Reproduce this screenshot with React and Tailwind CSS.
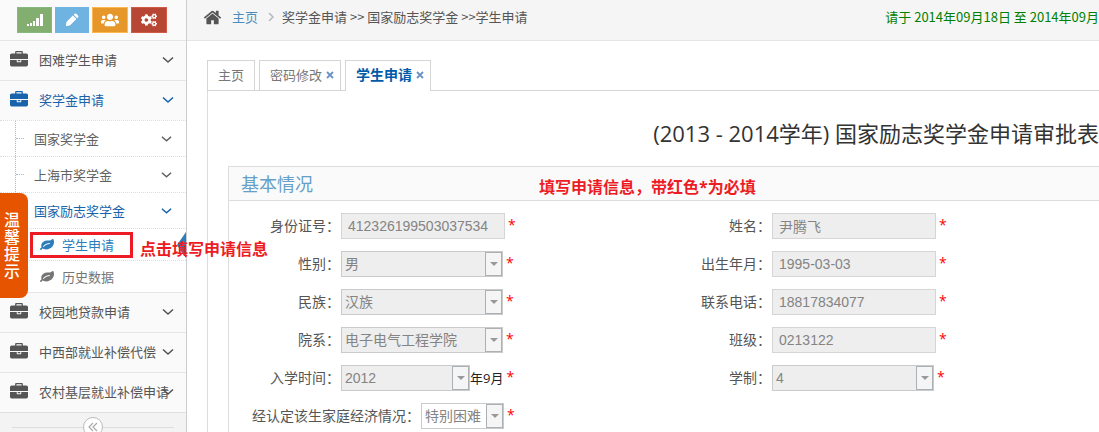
import { FaCogs, FaUsers } from 'react-icons/fa';

const paths = {
  home: 'M1472 992v480q0 26-19 45t-45 19h-384v-384h-256v384h-384q-26 0-45-19t-19-45v-480q0-1 .5-3t.5-3l575-474 575 474q1 2 1 6zm223-69l-62 74q-8 9-21 11h-3q-13 0-21-7l-692-577-692 577q-12 8-24 7-13-2-21-11l-62-74q-8-10-7-23.5t11-21.5l719-599q32-26 76-26t76 26l244 204v-195q0-14 9-23t23-9h192q14 0 23 9t9 23v408l219 182q10 8 11 21.5t-7 23.5z',
  briefcase: 'M640 256h512v-128h-512v128zm1152 640v480q0 66-47 113t-113 47h-1472q-66 0-113-47t-47-113v-480h672v160q0 26 19 45t45 19h320q26 0 45-19t19-45v-160h672zm-768 0v128h-256v-128h256zm768-480v384h-1792v-384q0-66 47-113t113-47h352v-160q0-40 28-68t68-28h576q40 0 68 28t28 68v160h352q66 0 113 47t47 113z',
  leaf: 'M1280 704q0-26-19-45t-45-19q-172 0-318 49.5t-259.5 134-235.5 219.5q-19 21-19 45 0 26 19 45t45 19q24 0 45-19 27-24 74-71t67-66q137-124 268.5-176t313.5-52q26 0 45-19t19-45zm512-198q0 95-20 193-46 224-184.5 383t-357.5 268q-214 108-438 108-148 0-286-47-15-5-88-42t-96-37q-16 0-39.5 32t-45 70-52.5 70-60 32q-43 0-63.5-17.5t-45.5-59.5q-2-4-6-11t-5.5-10-3-9.5-1.5-13.5q0-35 31-73.5t68-65.5 68-56 31-48q0-4-14-38t-16-44q-9-51-9-104 0-115 43.5-220t119-184.5 170.5-139 204-95.5q55-18 145-25.5t179.5-9 178.5-6 163.5-24 113.5-56.5l29.5-29.5 29.5-28 27-20 36.5-16 43.5-4.5q39 0 70.5 46t47.5 112 24 124 8 96z',
};

function Icon({ name, className }) {
  return (
    <svg viewBox="0 0 1792 1792" fill="currentColor" className={className} aria-hidden="true">
      <path d={paths[name]} />
    </svg>
  );
}

function Chevron({ className = '' }) {
  return (
    <svg viewBox="0 0 12 8" fill="none" stroke="currentColor" strokeWidth="1.6" className={`h-2 w-3 shrink-0 ${className}`} aria-hidden="true">
      <path d="M1 1.5l5 4.5 5-4.5" />
    </svg>
  );
}

function MenuItem({ label, active }) {
  return (
    <a
      href="#"
      className={`relative flex h-10 shrink-0 items-center border-t border-[#e5e5e5] bg-[#fafafa] pb-0.5 pl-2.5 whitespace-nowrap ${active ? 'text-[#1963aa]' : 'text-[#555]'}`}
    >
      <Icon name="briefcase" className="mr-[11px] size-[18px] shrink-0" />
      {label}
      <Chevron className="absolute right-3" />
    </a>
  );
}

function SubItem({ label, active, line }) {
  return (
    <a
      href="#"
      className={`relative flex h-9 items-center justify-between border-t border-dotted border-[#ddd] pr-3.5 pl-[34px] ${active ? 'text-[#1963aa]' : 'text-[#616161]'}`}
    >
      {line && <span className="absolute inset-y-0 left-[15px] border-l border-dotted border-[#9dbdd6]" />}
      {line && <span className="absolute left-4 w-2 border-t border-dotted border-[#9dbdd6]" />}
      {label}
      <Chevron className="w-[11px]" />
    </a>
  );
}

function LeafItem({ label, active }) {
  return (
    <a
      href="#"
      className={`relative flex h-8 items-center gap-2 border-t border-dotted border-[#ddd] pl-10 ${active ? 'text-[#2b7dbc]' : 'text-[#757575]'}`}
    >
      <Icon name="leaf" className="size-3.5" />
      {label}
      {active && <span className="absolute right-0 border-y-[13px] border-r-[9px] border-y-transparent border-r-[#2b7dbc]" />}
      {active && <span className="absolute top-[3px] right-[53px] left-[30px] h-[26px] border-3 border-[#ed1c24]" />}
      {active && (
        <span className="absolute top-2 left-[140px] z-10 text-base leading-6 font-bold whitespace-nowrap text-[#ed1c24]">
          点击填写申请信息
        </span>
      )}
    </a>
  );
}

function Sidebar() {
  return (
    <nav className="z-10 flex w-[187px] shrink-0 flex-col border-r border-[#ccc] bg-[#f3f3f3]">
      <div className="flex h-10 shrink-0 items-center gap-[3px] bg-[#fafafa] pl-[17px] text-white">
        <button aria-label="统计" className="flex h-[26px] w-[35px] items-center justify-center border border-[#87b87f] bg-[#82af6f]">
          <svg viewBox="0 0 16 14" fill="currentColor" className="h-3.5 w-4" aria-hidden="true">
            <path d="M0 11h2v2H0zM3 10h2v3H3zM6 8h2v5H6zM9 5h3v8H9zM13 1h3v12h-3z" />
          </svg>
        </button>
        <button aria-label="编辑" className="flex h-[26px] w-[34px] items-center justify-center bg-[#6fb3e0]">
          <svg viewBox="0 0 14 14" fill="currentColor" className="size-3.5" aria-hidden="true">
            <path d="M7.9 2.6l3.5 3.5-6 6Q4.500 13 1 13q0-3.500.9-4.400zM8.700 1.800l1-1q.8-.6 1.600 0l1.900 1.900q.6.800 0 1.600l-1 1z" />
          </svg>
        </button>
        <button aria-label="用户" className="flex h-[26px] w-9 items-center justify-center border border-[#ffb752] bg-[#e59729]">
          <FaUsers className="size-[18px]" />
        </button>
        <button aria-label="设置" className="flex h-[26px] w-9 items-center justify-center border border-[#d15b47] bg-[#b74635]">
          <FaCogs className="size-4" />
        </button>
      </div>
      <MenuItem label="困难学生申请" />
      <MenuItem label="奖学金申请" active />
      <div className="shrink-0 bg-white">
        <SubItem label="国家奖学金" line />
        <SubItem label="上海市奖学金" line />
        <SubItem label="国家励志奖学金" active />
        <LeafItem label="学生申请" active />
        <LeafItem label="历史数据" />
      </div>
      <MenuItem label="校园地贷款申请" />
      <MenuItem label="中西部就业补偿代偿" />
      <MenuItem label="农村基层就业补偿申请" />
      <div className="flex shrink-0 items-center border-t border-[#e0e0e0] px-3 pt-1">
        <span className="h-px flex-1 bg-[#ddd]" />
        <button aria-label="收起菜单" className="flex size-5 items-center justify-center rounded-full border border-[#bbb] bg-white text-[#aaa]">
          <svg viewBox="0 0 10 10" fill="none" stroke="currentColor" strokeWidth="1.2" className="size-2.5" aria-hidden="true">
            <path d="M5 1L1 5l4 4M9 1L5 5l4 4" />
          </svg>
        </button>
        <span className="h-px flex-1 bg-[#ddd]" />
      </div>
    </nav>
  );
}

function Tab({ label, active, closable }) {
  return (
    <div
      className={`flex items-center gap-1 border border-b-0 border-[#d5d5d5] bg-white pb-0.5 pl-2.5 ${closable ? 'pr-1.5' : 'pr-2.5'} ${active ? '-mb-px h-[31px] text-sm font-bold text-[#005ba8]' : 'h-[30px] text-[#777]'}`}
    >
      <a href="#">{label}</a>
      {closable && (
        <button aria-label={`关闭${label}`} className="flex size-2 items-center justify-center text-[#6a92c4]">
          <svg viewBox="0 0 8 8" stroke="currentColor" strokeWidth="1.8" className="size-2" aria-hidden="true">
            <path d="M1 1l6 6M7 1L1 7" />
          </svg>
        </button>
      )}
    </div>
  );
}

function Field({ id, label, value, select, suffix, wide, width = 'w-[164px]', bg = 'bg-[#eee]' }) {
  return (
    <div className="flex h-[26px] items-center text-sm">
      <label htmlFor={id} className={`${wide ? 'w-48' : 'w-28'} pr-px text-right whitespace-nowrap text-[#555]`}>
        {label}：
      </label>
      {select ? (
        <div className={`relative ${width}`}>
          <select
            id={id}
            disabled
            className={`block h-[26px] w-full appearance-none border border-[#c8cacc] pl-[3px] font-[Liberation_Sans,Noto_Sans_CJK_SC,sans-serif] text-[#848484] opacity-100 ${bg}`}
          >
            <option>{value}</option>
          </select>
          <span className="pointer-events-none absolute inset-y-px right-px flex w-[17px] items-center justify-center border border-[#abb0b5] bg-[#f5f5f5]">
            <span className="border-x-4 border-t-4 border-x-transparent border-t-[#999]" />
          </span>
        </div>
      ) : (
        <input
          id={id}
          disabled
          defaultValue={value}
          className={`h-[26px] border border-[#d5d5d5] bg-[#eee] pl-1.5 font-[Liberation_Sans,Noto_Sans_CJK_SC,sans-serif] text-[#848484] ${width}`}
        />
      )}
      {suffix && <span className="text-[13px] text-[#222]">{suffix}</span>}
      <span className="pb-0.5 pl-[3px] text-sm text-[#f00]">*</span>
    </div>
  );
}

export default function App() {
  return (
    <div className="relative flex h-screen overflow-hidden bg-white font-[Open_Sans,Noto_Sans_CJK_SC,sans-serif] text-[13px] leading-5">
      <Sidebar />
      <aside className="absolute top-[193px] left-0 z-20 flex h-[105px] w-7 items-center rounded-r-lg bg-[#e65400] pl-1">
        <span className="w-4 text-base leading-[17px] font-medium text-white">温馨提示</span>
      </aside>

      <main className="min-w-0 flex-1">
        <header className="flex h-[41px] items-center border-b border-[#e5e5e5] bg-[#f5f5f5] pb-1.5 pl-4 font-[Noto_Sans_CJK_SC,sans-serif] whitespace-nowrap text-[#555]">
          <Icon name="home" className="mr-2.5 size-[19px] shrink-0" />
          <a href="#" className="text-[#4c8fbd]">主页</a>
          <svg viewBox="0 0 6 8" fill="none" stroke="#b2b6bf" strokeWidth="1.5" className="mr-2 ml-2.5 h-2 w-1.5" aria-hidden="true">
            <path d="M1 0l4 4-4 4" />
          </svg>
          <span>奖学金申请 &gt;&gt; 国家励志奖学金 &gt;&gt;学生申请</span>
          <span className="ml-auto text-[#008000]">请于 2014年09月18日 至 2014年09月</span>
        </header>

        <div className="pt-[19px] pl-5">
          <div className="flex items-start gap-1 border-b border-[#d5d5d5]">
            <Tab label="主页" />
            <Tab label="密码修改" closable />
            <Tab label="学生申请" active closable />
          </div>
          <div className="h-screen border-l border-[#ddd] pl-5">
            <h1 className="pt-[26px] pb-[17px] text-right text-[22px] leading-8 whitespace-nowrap text-[#333]">
              (2013 - 2014学年) 国家励志奖学金申请审批表
            </h1>
            <section className="h-full border-t border-l border-[#ddd]">
              <div className="flex h-[34px] items-center border-b border-[#ddd] bg-[#fafafa] pl-3">
                <h2 className="w-[298px] text-lg text-[#669fc7]">基本情况</h2>
                <span className="pt-1.5 text-base font-bold text-[#ed1c24]">填写申请信息，带红色*为必填</span>
              </div>
              <form className="grid grid-cols-[431px_1fr] gap-y-3 pt-3">
                <Field id="idno" label="身份证号" value="412326199503037534" />
                <Field id="name" label="姓名" value="尹腾飞" />
                <Field id="gender" label="性别" value="男" select width="w-[162px]" />
                <Field id="birth" label="出生年月" value="1995-03-03" />
                <Field id="nation" label="民族" value="汉族" select width="w-[162px]" />
                <Field id="phone" label="联系电话" value="18817834077" />
                <Field id="dept" label="院系" value="电子电气工程学院" select width="w-[162px]" />
                <Field id="class" label="班级" value="0213122" />
                <Field id="year" label="入学时间" value="2012" select width="w-[129px]" suffix="年9月" />
                <Field id="length" label="学制" value="4" select width="w-[162px]" />
                <Field id="economy" label="经认定该生家庭经济情况" value="特别困难" select wide width="w-[83px]" bg="bg-white" />
              </form>
            </section>
          </div>
        </div>
      </main>
    </div>
  );
}
